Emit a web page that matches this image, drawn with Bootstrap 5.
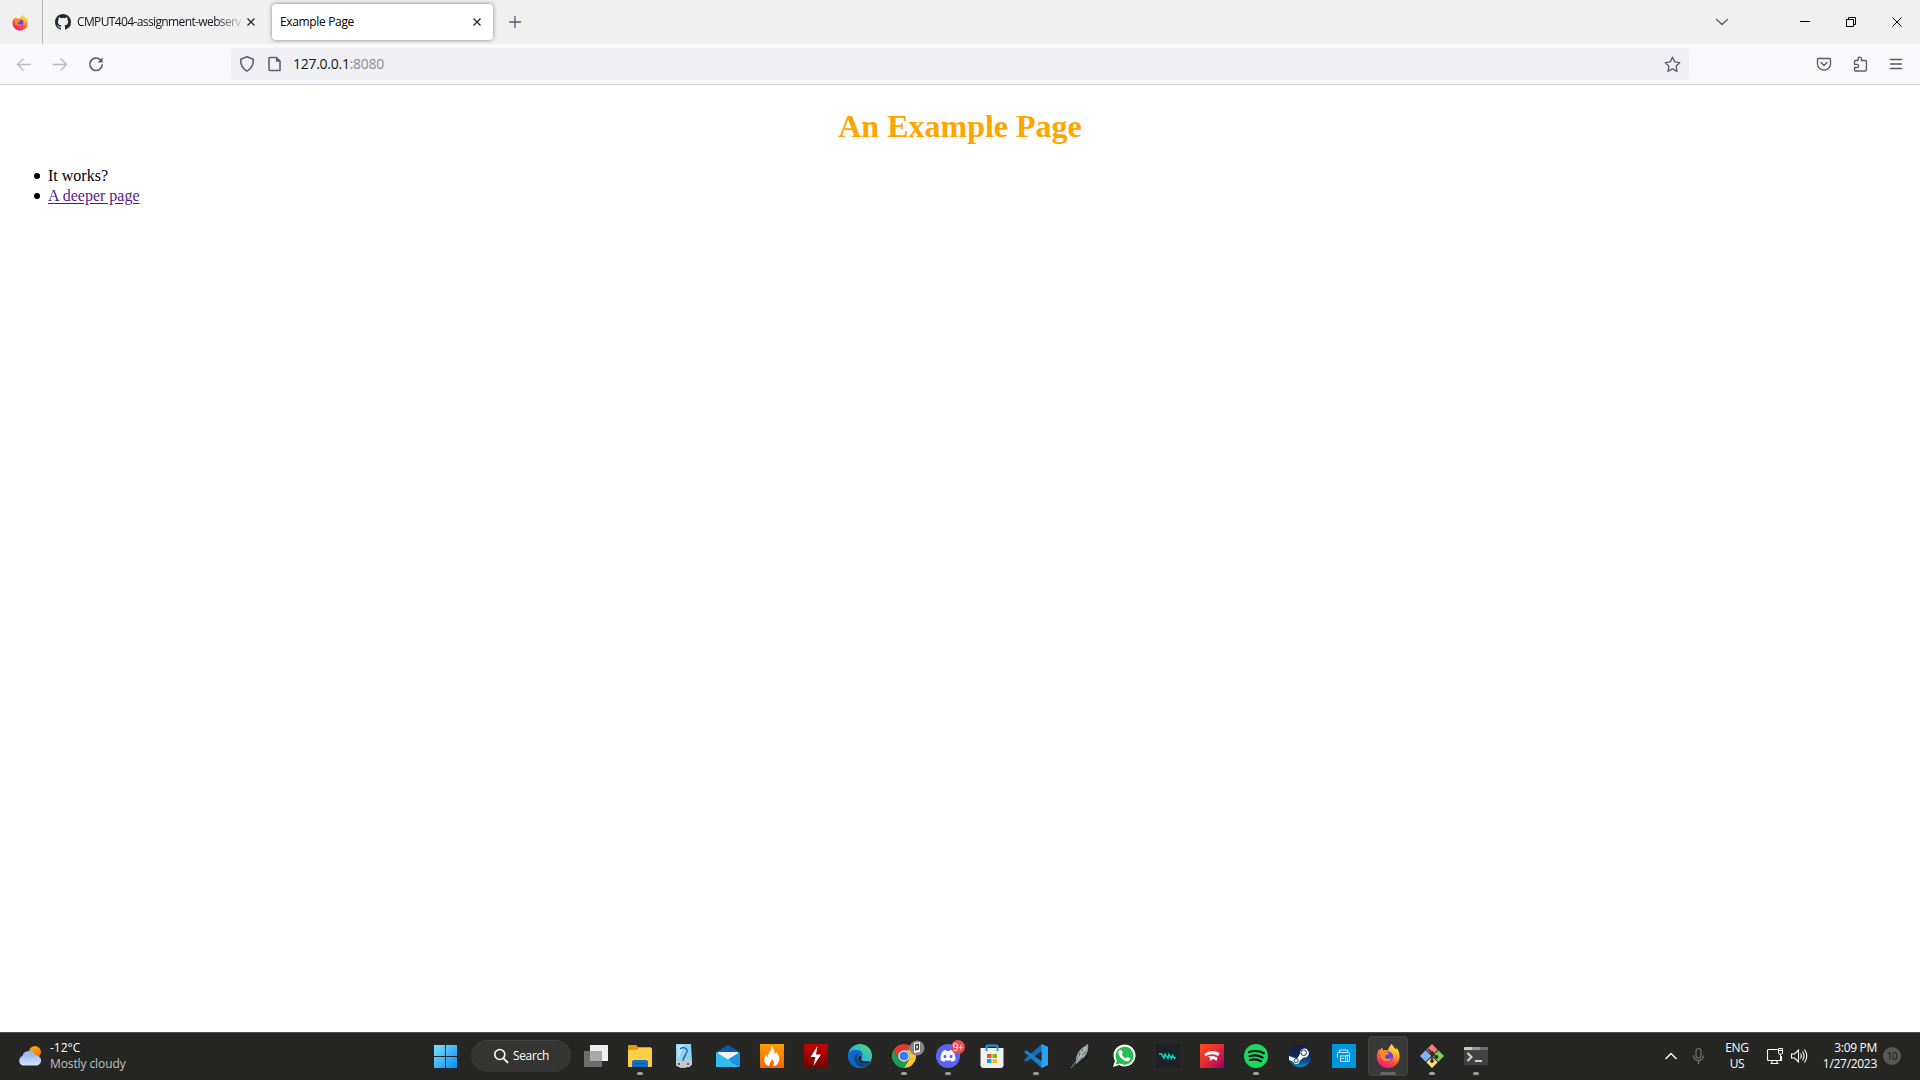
<!DOCTYPE html>
<html lang="en">
<head>
<meta charset="utf-8">
<meta name="viewport" content="width=device-width, initial-scale=1">
<title>Example Page</title>
<link href="https://cdn.jsdelivr.net/npm/bootstrap@5.3.0/dist/css/bootstrap.min.css" rel="stylesheet">
<style>
  body { font-family: "Open Sans", "Noto Sans", sans-serif; background: #fff; overflow: hidden; line-height: 1.2; }
  svg { display: block; flex: none; }
  .ln { fill: none; stroke: #5b5b66; stroke-width: 1.35; stroke-linecap: round; stroke-linejoin: round; }

  .tabstrip { height: 44px; background: #f0f0f0; font-size: 12px; color: #15141a; letter-spacing: -.34px; }
  .fx-view { width: 43px; border-right: 1px solid #b5b5b7; padding-left: 12px; }
  .tab-item { width: 229px; padding: 0 15px 0 12px; flex: none; }
  .tab-title { width: 169px; margin-left: 6px; padding-top: 1px; letter-spacing: -.62px; white-space: nowrap; -webkit-mask-image: linear-gradient(to right, #000 138px, transparent 168px); mask-image: linear-gradient(to right, #000 138px, transparent 168px); }
  .tab-current { width: 221px; height: 36px; background: #fff; border-radius: 4px; box-shadow: 0 0 4px rgba(0,0,0,.45); padding: 0 11px 0 8px; color: #000; }
  .tab-current span { padding-top: 1px; }
  .win-buttons { gap: 30px; padding-right: 15px; }
  .all-tabs { margin-right: 21px; }

  .toolbar { height: 41px; background: #f9f9fb; border-bottom: 1px solid #ccccd0; }
  .nav-buttons { width: 231px; flex: none; gap: 20px; padding-left: 16px; }
  .urlbar { width: 1458px; flex: none; height: 32px; background: #f0f0f4; border-radius: 4px; padding: 0 8px; font-size: 14px; letter-spacing: -.27px; color: #15141a; }
  .address { padding-top: 1px; margin-left: 10px; }
  .port { color: #8b8b91; }
  .tool-buttons { gap: 20px; padding-right: 16px; }

  .webpage { height: 947px; padding: 22px 8px 0; font-family: "Liberation Serif", serif; font-size: 16px; line-height: 20px; color: #000; }
  .webpage h1 { font-size: 32px; line-height: 38px; font-weight: 700; color: orange; margin: 0 0 21px; }
  .webpage ul { padding-left: 26px; }
  .webpage li::before { content: ""; width: 6px; height: 6px; border-radius: 50%; background: #000; margin-right: 8px; }
  .webpage a { color: #551a8b; text-underline-offset: 2px; }

  .taskbar { height: 48px; padding-bottom: 2px; background: #262624; border-top: 1px solid #4b4b4b; color: #fff; font-size: 12px; }
  .weather { width: 423px; padding-left: 17px; line-height: 16px; gap: 7px; }
  .weather-desc { color: #c2c2c2; letter-spacing: -.1px; }
  .task-slot { width: 44px; height: 47px; }
  .searchbox { width: 100px; height: 32px; border-radius: 16px; background: #353533; border-top: 1px solid #434341; margin: 0 3px 0 4px; letter-spacing: -.3px; gap: 4px; }
  .running { bottom: 4px; left: 19px; width: 6px; height: 3px; border-radius: 2px; background: #9c9c9a; }
  .running-active { bottom: 4px; left: 14px; width: 16px; height: 3px; border-radius: 2px; background: #666664; }
  .slot-active::before { content: ""; position: absolute; inset: 4px 2px 3px; background: #393937; border: 1px solid #424240; border-radius: 4px; }
  .count { left: 25px; top: 8px; width: 14px; height: 14px; border-radius: 50%; background: #e94b50; font-size: 10px; line-height: 14px; letter-spacing: -.5px; }
  .profile { right: 1px; top: 8px; }
  .tray { line-height: 16px; padding-right: 19px; }
  .lang { width: 24px; margin: 0 17px 0 19px; letter-spacing: -.3px; }
  .clock { width: 64px; margin-left: 5px; letter-spacing: -.3px; }
  .notices { width: 18px; height: 18px; border-radius: 50%; background: #575755; color: #151514; font-size: 10px; line-height: 18px; margin-left: 6px; letter-spacing: -.5px; }
</style>
<script src="https://cdn.jsdelivr.net/npm/bootstrap@5.3.0/dist/js/bootstrap.bundle.min.js"></script>
</head>
<body class="d-flex flex-column vh-100">
<svg width="0" height="0" class="position-absolute" aria-hidden="true">
  <defs>
    <linearGradient id="gFox" x1=".8" y1="0" x2=".3" y2="1"><stop offset="0" stop-color="#fff04a"/><stop offset=".35" stop-color="#ffb02e"/><stop offset=".65" stop-color="#ff4f3b"/><stop offset="1" stop-color="#f0148a"/></linearGradient>
    <linearGradient id="gWin" x1="0" y1="0" x2="1" y2="1"><stop offset="0" stop-color="#7be0fb"/><stop offset="1" stop-color="#0a8ef5"/></linearGradient>
    <linearGradient id="gEdge" x1="0" y1="1" x2="1" y2="0"><stop offset="0" stop-color="#0d6bd0"/><stop offset=".5" stop-color="#27b4df"/><stop offset="1" stop-color="#63e05a"/></linearGradient>
    <linearGradient id="gFire" x1="0" y1="0" x2="0" y2="1"><stop offset="0" stop-color="#ffa000"/><stop offset="1" stop-color="#f56200"/></linearGradient>
    <linearGradient id="gRed" x1="0" y1="0" x2="0" y2="1"><stop offset="0" stop-color="#c60202"/><stop offset="1" stop-color="#760000"/></linearGradient>
    <linearGradient id="gStadia" x1="0" y1="0" x2="1" y2="1"><stop offset="0" stop-color="#ff4c1d"/><stop offset=".5" stop-color="#e52b38"/><stop offset="1" stop-color="#9a0068"/></linearGradient>
    <linearGradient id="gSteam" x1="0" y1="0" x2="0" y2="1"><stop offset="0" stop-color="#151c3c"/><stop offset=".5" stop-color="#10295a"/><stop offset="1" stop-color="#1683bd"/></linearGradient>
    <linearGradient id="gCloud" x1="0" y1="0" x2="0" y2="1"><stop offset="0" stop-color="#8fb4ee"/><stop offset="1" stop-color="#d4e3fb"/></linearGradient>
    <linearGradient id="gSun" x1="0" y1="0" x2="1" y2="1"><stop offset="0" stop-color="#f7b51c"/><stop offset="1" stop-color="#ef6a0c"/></linearGradient>
    <symbol id="firefox" viewBox="0 0 24 24">
      <path fill="url(#gFox)" d="M15.500 0c1.200 1.400 2.300 2.600 3.200 4.200l1.600 1.200c.1-.7.1-1.300 0-2 2.300 2.400 3.500 6 3.300 9.600C23.300 19.300 18.200 24 12 24S.8 19 .8 12.700c0-2.900.7-5.700 2.400-7.900 0 .7.100 1.300.3 1.900.8-1.300 1.700-2.400 2.900-3.100l.4 2.800c1.700-.6 3.300-.5 5 .1 1-2.700 2.100-4.700 3.700-6.500z"/>
      <circle cx="12" cy="12.500" r="5" fill="#6c3fe0"/>
      <path fill="#ff8b2c" d="M3.500 6.700c2-1 5-1 7.600 1.300l2 1.800c-.8 1-2.200 1.100-3.300 1.400-1.200.6-1.200 2.200-.2 3.100 1.400 1.200 4.200 1 6.300-.7-.7 3.400-5.300 4.800-8.700 2.600-2.400-1.600-3.900-5.400-3.700-9.500z"/>
    </symbol>
  </defs>
</svg>

<header>
  <div class="tabstrip d-flex align-items-center">
    <div class="fx-view h-100 d-flex align-items-center"><svg width="16" height="17"><use href="#firefox"/></svg></div>
    <div class="tab-item d-flex align-items-center">
      <svg width="16" height="16" viewBox="0 0 16 16"><path fill="#24292f" d="M8 0C3.580 0 0 3.580 0 8c0 3.540 2.290 6.530 5.470 7.590.4.070.55-.17.55-.38v-1.340c-2.230.48-2.700-1.070-2.700-1.070-.36-.92-.89-1.170-.89-1.170-.72-.5.060-.49.060-.49.8.060 1.230.83 1.230.83.71 1.220 1.870.87 2.330.66.070-.52.280-.87.500-1.070-1.780-.2-3.640-.89-3.640-3.950 0-.87.310-1.590.82-2.150-.08-.2-.36-1.020.080-2.120 0 0 .67-.21 2.200.82a7.600 7.600 0 0 1 4 0c1.530-1.040 2.200-.82 2.200-.82.44 1.100.16 1.920.080 2.120.51.560.82 1.270.82 2.150 0 3.070-1.870 3.750-3.650 3.950.29.250.54.730.54 1.480v2.200c0 .21.150.46.550.38A8 8 0 0 0 16 8c0-4.420-3.580-8-8-8z"/></svg>
      <div class="tab-title">CMPUT404-assignment-webserv</div>
      <svg width="10" height="10" viewBox="0 0 10 10"><path d="M1.500 1.500l7 7m0-7l-7 7" stroke="#222" stroke-width="1.200"/></svg>
    </div>
    <div class="tab-current d-flex align-items-center justify-content-between">
      <span>Example Page</span>
      <svg width="10" height="10" viewBox="0 0 10 10"><path d="M1.500 1.500l7 7m0-7l-7 7" stroke="#222" stroke-width="1.200"/></svg>
    </div>
    <svg class="ms-3" width="12" height="14" viewBox="1 0 12 14"><path d="M7 1.500v11M1.500 7h11" class="ln"/></svg>
    <div class="win-buttons ms-auto d-flex align-items-center">
      <svg class="all-tabs" width="16" height="16" viewBox="0 0 16 16"><path d="M2.500 5.500L8 10.500l5.500-5" class="ln"/></svg>
      <svg width="16" height="16" viewBox="0 0 16 16" class="ms-3"><path d="M3 7.500h10" stroke="#000"/></svg>
      <svg width="16" height="16" viewBox="0 0 16 16"><path d="M3.500 5.500h7v7h-7zM5.500 5.500v-2h7v7h-2" fill="none" stroke="#000"/></svg>
      <svg width="16" height="16" viewBox="0 0 16 16"><path d="M3.500 3.500l9 9m0-9l-9 9" stroke="#000"/></svg>
    </div>
  </div>
  <div class="toolbar d-flex align-items-center">
    <div class="nav-buttons d-flex">
      <svg width="16" height="16" viewBox="0 0 16 16"><path d="M14.500 8.500H1.500m5.500-5.500l-5.500 5.500L7 14" class="ln" style="stroke:#bababf"/></svg>
      <svg width="16" height="16" viewBox="0 0 16 16"><path d="M1.500 8.500h13M9 3l5.500 5.500L9 14" class="ln" style="stroke:#bababf"/></svg>
      <svg width="16" height="16" viewBox="0 0 16 16"><path d="M12.500 4A6.200 6.200 0 1 0 14.200 8.700" class="ln" style="stroke-width:1.600"/><path d="M14.600 1.500v5H9.600z" fill="#5b5b66"/></svg>
    </div>
    <div class="urlbar d-flex align-items-center">
      <svg width="16" height="16" viewBox="0 0 16 16"><path d="M8 .8l6.200 2.400c.5 4.800-1 9-6.200 12C2.800 12.200 1.300 8 1.800 3.200z" class="ln" style="stroke-width:1.500"/></svg>
      <svg width="16" height="16" viewBox="0 0 16 16" style="margin-left:12px"><path d="M3 1.500h6.500l3.500 3.500v9.500H3a1 1 0 0 1-1-1v-11a1 1 0 0 1 1-1z" class="ln" style="stroke-width:1.500"/><path d="M9 1v4.700h4.500z" fill="#5b5b66"/></svg>
      <span class="address me-auto">127.0.0.1<span class="port">:8080</span></span>
      <svg width="17" height="17" viewBox="0 0 17 17"><path d="M8.500 1.200l2.200 4.700 5.100.7-3.700 3.600.9 5.100-4.500-2.400L4 15.300l.9-5.100L1.200 6.600l5.100-.7z" class="ln"/></svg>
    </div>
    <div class="tool-buttons ms-auto d-flex">
      <svg width="16" height="16" viewBox="0 0 16 16"><path d="M2.500 2.500h11a1 1 0 0 1 1 1V8a6.500 6 0 0 1-13 0V3.500a1 1 0 0 1 1-1zM5 6.500l3 3 3-3" class="ln"/></svg>
      <svg width="16" height="16" viewBox="0 0 16 16"><path d="M3.500 4.500H6V2.800a1.700 1.700 0 0 1 3.400 0v1.700h4a1 1 0 0 1 1 1V14a1 1 0 0 1-1 1H3.500a1 1 0 0 1-1-1v-2.500H5a1.500 1.500 0 0 0 0-3.200H2.500V5.500a1 1 0 0 1 1-1z" class="ln"/></svg>
      <svg width="16" height="16" viewBox="0 0 16 16"><path d="M2.500 3.500h11M2.500 8h11M2.500 12.500h11" class="ln"/></svg>
    </div>
  </div>
</header>

<main class="webpage">
  <h1 class="text-center">An Example Page</h1>
  <ul class="list-unstyled mb-0" style="padding-left:26px">
    <li class="d-flex align-items-center">It works?</li>
    <li class="d-flex align-items-center"><a href="#">A deeper page</a></li>
  </ul>
</main>

<footer class="taskbar d-flex align-items-center">
  <div class="weather d-flex align-items-center">
    <svg width="26" height="24" viewBox="0 0 26 24"><circle cx="18" cy="8" r="6" fill="url(#gSun)"/><path d="M6 21.500a5 5 0 0 1-.5-9.500 6.500 6.500 0 0 1 12.500-.5A5 5 0 0 1 20 21.500z" fill="url(#gCloud)"/><path d="M8 13c2-1 4-.5 5 1 1-1.500 3-2.200 5-1.500" fill="none" stroke="#9fbdf0"/></svg>
    <div><div class="temp">-12°C</div><div class="weather-desc">Mostly cloudy</div></div>
  </div>
  <div class="task-slot d-flex align-items-center justify-content-center">
    <svg width="24" height="24" viewBox="0 0 24 24"><path fill="url(#gWin)" d="M1 1h11v11H1zM13 1h11v11H13zM1 13h11v11H1zM13 13h11v11H13z"/></svg>
  </div>
  <div class="searchbox d-flex align-items-center justify-content-center">
    <svg width="16" height="16" viewBox="0 0 16 16"><circle cx="6.800" cy="6.500" r="5" fill="none" stroke="#fff" stroke-width="1.600"/><path d="M10.500 10.300l4 4" stroke="#fff" stroke-width="1.800" stroke-linecap="round"/></svg>
    <span>Search</span>
  </div>
  <nav class="d-flex" aria-label="Apps">
    <div class="task-slot d-flex align-items-center justify-content-center"><svg width="24" height="24" viewBox="0 0 24 24"><path fill="#eeeeee" d="M6 1h18v16H6z"/><path fill="#777" fill-opacity=".88" d="M0 7h18v16H0z"/><path fill="#a8a8a8" d="M6 7h12v10H6z"/></svg></div>
    <div class="task-slot position-relative d-flex align-items-center justify-content-center"><svg width="24" height="24" viewBox="0 0 24 24"><path fill="#e09a09" d="M0 2q0-1 1-1h7l2 2h13v6H0z"/><path fill="#ffce49" d="M0 6h9l2-2h12q1 0 1 1v17q0 1-1 1H1q-1 0-1-1z"/><path fill="#0f6fc2" d="M4 23v-5q0-2 2-2h12q2 0 2 2v5z"/><path fill="#084f92" d="M7 19h10v1H7z"/></svg><span class="running position-absolute"></span></div>
    <div class="task-slot d-flex align-items-center justify-content-center"><svg width="24" height="24" viewBox="0 0 24 24"><path fill="#8fd1f0" d="M4 0h15l1 17-2 6-10 1-4-4z"/><path fill="#bfe6f8" d="M5 1h7L6 16z"/><path fill="#c5c9cc" d="M4 17l16-1v5l-8 3-8-2z"/><path d="M8 5c4-3 8 0 7 3s-4 4-4 9M15 8l-4 8" fill="none" stroke="#1268a9" stroke-width="1.200"/><path fill="#5e6468" d="M6 19h2v2H6zm9 0h2v2h-2z"/></svg></div>
    <div class="task-slot d-flex align-items-center justify-content-center"><svg width="24" height="24" viewBox="0 0 24 24"><path fill="#0c59a4" d="M0 8l12-7 12 7v5H0z"/><path fill="#f2f2f2" d="M2 8h20v7l-10 3L2 15z"/><path fill="#31bdf2" d="M0 8l24 15H0z"/><path fill="#1e93e0" d="M24 8v15L12 15.500z"/></svg></div>
    <div class="task-slot d-flex align-items-center justify-content-center"><svg width="24" height="24" viewBox="0 0 24 24"><path fill="url(#gFire)" d="M0 0h24v24H0z"/><path fill="#fff" d="M11 2c3 3 4 5 3.500 8 1 0 1.500-1 1.500-2 3 3 4 6 3 9-1 3-3 5-6 5 2-2 1-5-1-7 0 2-3 3-2.500 7-4-.5-6-4-5-8 .5-2 1.500-3 2-4 0 2 0 3 1.200 3.500C7.500 9 12 7 11 2z"/></svg></div>
    <div class="task-slot d-flex align-items-center justify-content-center"><svg width="24" height="24" viewBox="0 0 24 24"><path fill="url(#gRed)" d="M0 0h24v24H0z"/><path fill="#fff" d="M13.500 2L6.500 13h4.800L9.500 22 17 10.500h-5z"/></svg></div>
    <div class="task-slot d-flex align-items-center justify-content-center"><svg width="24" height="24" viewBox="0 0 24 24"><circle cx="12" cy="12" r="12" fill="url(#gEdge)"/><path fill="#0d67c4" d="M0 12c1-5 5-6.500 9-6 4 .4 6 3 5.500 6-3-2-6 .5-5 4 1 4 6 5 12 2.500C17 27 1 26 0 12z"/><path fill="#10458e" d="M8 10c-4 5 0 13 7 13 3-.5 5-2 7-5-5 2.500-10 1.500-12-2-1-2-.5-4 1-5z"/><path fill="#262624" d="M11 12c2-1.500 3.500.5 2.500 2.500-1.300 2.200 2.500 3.500 7 2.500l2 1c-5 2.500-10 2-12-2-.7-1.600-.4-3 .5-4z"/></svg></div>
    <div class="task-slot position-relative d-flex align-items-center justify-content-center">
      <svg width="24" height="24" viewBox="0 0 24 24"><path fill="#e33b2e" d="M12 0a12 12 0 0 1 10.400 6H12a6 6 0 0 0-5.200 9L1.600 6A12 12 0 0 1 12 0z"/><path fill="#fcc934" d="M22.400 6A12 12 0 0 1 12 24l5.200-9A6 6 0 0 0 12 6z"/><path fill="#1e9e4a" d="M1.600 6l5.200 9A6 6 0 0 0 17.200 15L12 24A12 12 0 0 1 1.600 6z"/><circle cx="12" cy="12" r="5.800" fill="#fff"/><circle cx="12" cy="12" r="4.600" fill="#3b7ded"/></svg>
      <svg class="profile position-absolute" width="16" height="16" viewBox="0 0 16 16"><circle cx="8" cy="8" r="7.500" fill="#858583"/><path fill="#eee" d="M5 3l6-1v10l-6 1z"/><path fill="#3a3a3a" d="M6 4.500l4-1v6l-4 1z"/><path fill="#ccc" d="M7 6l2-1v3l-2 1z"/></svg><span class="running position-absolute"></span></div>
    <div class="task-slot position-relative d-flex align-items-center justify-content-center"><svg width="24" height="24" viewBox="0 0 24 24"><circle cx="12" cy="12" r="12" fill="#5865f2"/><path fill="#fff" d="M7 7q1.500-.8 3-1l.6 1q1.400-.2 2.800 0l.6-1q1.500.2 3 1c2 3 2.700 6 2.400 9-1.300 1-2.400 1.500-3.800 1.800l-.9-1.500q-2.700.7-5.400 0l-.9 1.500C7 17.500 5.900 17 4.600 16 4.300 13 5 10 7 7z"/><ellipse cx="9" cy="12.500" rx="1.500" ry="1.700" fill="#5865f2"/><ellipse cx="15" cy="12.500" rx="1.500" ry="1.700" fill="#5865f2"/></svg><span class="count position-absolute text-center">9+</span><span class="running position-absolute"></span></div>
    <div class="task-slot d-flex align-items-center justify-content-center"><svg width="24" height="24" viewBox="0 0 24 24"><path d="M6.500 7V2.500q0-1 1-1h9q1 0 1 1V7" fill="none" stroke="#249be5" stroke-width="2"/><path fill="#f1f1f1" d="M.5 4h23v17q0 3-3 3h-17q-3 0-3-3z"/><path fill="#249be5" d="M5.500 4h2v3h-2zm11 0h2v3h-2z"/><path fill="#f25022" d="M7 10h4.500v4H7z"/><path fill="#7fba00" d="M12.500 10H17v4h-4.500z"/><path fill="#00a4ef" d="M7 15h4.500v4H7z"/><path fill="#ffb900" d="M12.500 15H17v4h-4.500z"/></svg></div>
    <div class="task-slot position-relative d-flex align-items-center justify-content-center"><svg width="24" height="24" viewBox="0 0 24 24"><path fill="#0b70bd" d="M0 16l2 2L18 7V0L3 13z"/><path fill="#1680cf" d="M0 8l2-2 16 11.500V24z"/><path fill="#2ba3f1" d="M17.500 0L24 2.700v18.600L17.500 24z"/></svg><span class="running position-absolute"></span></div>
    <div class="task-slot d-flex align-items-center justify-content-center"><svg width="24" height="24" viewBox="0 0 24 24"><path fill="#1d1d1c" d="M7 19l12-8 2 2-5 5z"/><path fill="#a3a7a8" d="M20 0c1 4-1 12-6 15l-6 5c-1-5 1-12 6-16z"/><path d="M19 2L3 24M11 8l1 4m2-7l1 4m-5 7l5-2m-1-3l4-3" fill="none" stroke="#60686c"/><path d="M18 3l-8 13" stroke="#dcdcdc"/><path d="M8 18l-5 6" stroke="#777"/></svg></div>
    <div class="task-slot d-flex align-items-center justify-content-center"><svg width="24" height="24" viewBox="0 0 24 24"><path fill="#fff" d="M1 23l2-6A11 11 0 1 1 7 21z"/><path fill="#27bd50" d="M3.500 20.500l1.400-4A9 9 0 1 1 8 19.500z"/><path fill="#fff" d="M8 6h1.500l1.300 3-1 1.500c1 2 2.200 3 4 3.800l1.500-1.500 3 1.500c0 2-1.300 3-3 3-4 0-9-5-9-8.500C6.300 7.500 7 6.300 8 6z"/></svg></div>
    <div class="task-slot d-flex align-items-center justify-content-center"><svg width="24" height="24" viewBox="0 0 24 24"><rect width="24" height="24" rx="1" fill="#1c2126"/><path d="M3 10h2.500l2.500 4 1-4 3 4.500 1-4 2.500 4 1-3 2 3 1-1.500" fill="none" stroke="#12cfc4" stroke-width="1.500"/></svg></div>
    <div class="task-slot d-flex align-items-center justify-content-center"><svg width="24" height="24" viewBox="0 0 24 24"><path fill="url(#gStadia)" d="M0 0h24v24H0z"/><path fill="#fff" d="M4.500 10C9 6.500 15 6 19.500 9.500L18 12c-3-2-6.500-2.300-10.500-1L6 12.500zM8 12.500c3.500-1 6.500-.6 9.500 1L16.500 17c-1.500-1.700-3-2-4.500-1.500L9.500 17l.8-2.500z"/></svg></div>
    <div class="task-slot position-relative d-flex align-items-center justify-content-center"><svg width="24" height="24" viewBox="0 0 24 24"><circle cx="12" cy="12" r="12" fill="#1ed760"/><path d="M5 8q8-2.500 15 1.200M5.500 12.200q7-2 13 1.300M6 16q6-1.600 11 1.200" fill="none" stroke="#111" stroke-width="2.200" stroke-linecap="round"/></svg><span class="running position-absolute"></span></div>
    <div class="task-slot d-flex align-items-center justify-content-center"><svg width="24" height="24" viewBox="0 0 24 24"><circle cx="12" cy="12" r="11.300" fill="url(#gSteam)"/><path fill="#fff" d="M1 12l8 3 3-5a4.500 4.500 0 1 1 3.500 3.500L11.500 17a3.200 3.200 0 0 1-6.300.7L1 16z"/><circle cx="15.700" cy="8.700" r="2.800" fill="none" stroke="#16264c" stroke-width="1"/><circle cx="8.200" cy="16.700" r="2" fill="none" stroke="#17548a"/></svg></div>
    <div class="task-slot d-flex align-items-center justify-content-center"><svg width="24" height="24" viewBox="0 0 24 24"><path fill="#0096dc" d="M0 0h24v24H0z"/><path d="M7.500 8V6h8v2M5.500 13.500v-4q0-1 1-1h10q1 0 1 1V11M8 12h5M8.500 12v5.500H13M9.500 14.500H12M13.500 11.500h4v6h-4zM15.500 11.500v6" fill="none" stroke="#bce8fb"/></svg></div>
    <div class="task-slot slot-active position-relative d-flex align-items-center justify-content-center"><svg class="position-relative" width="24" height="24"><use href="#firefox"/></svg><span class="running-active position-absolute"></span></div>
    <div class="task-slot position-relative d-flex align-items-center justify-content-center"><svg width="24" height="24" viewBox="0 0 24 24"><g transform="rotate(45 12 12)"><path fill="#f47c7c" d="M3.500 3.500h8v8h-8z"/><path fill="#84c75a" d="M12.500 3.500h8v8h-8z"/><path fill="#7fb0fb" d="M3.500 12.500h8v8h-8z"/><path fill="#fbdf7c" d="M12.500 12.500h8v8h-8z"/></g><path d="M8 5l4 4v9M12 9l4 4" stroke="#33302e" stroke-width="1.700" fill="none"/><circle cx="12" cy="9" r="1.900" fill="#33302e"/><circle cx="16.500" cy="13" r="1.900" fill="#33302e"/><circle cx="12" cy="17" r="1.900" fill="#33302e"/></svg><span class="running position-absolute"></span></div>
    <div class="task-slot position-relative d-flex align-items-center justify-content-center"><svg width="24" height="24" viewBox="0 0 24 24"><rect y="3" width="24" height="18" rx="1" fill="#424245"/><path fill="#c9c9c9" d="M0 6V4q0-1 1-1h7v3z"/><path fill="#999" d="M8 3h8v3H8z"/><path fill="#6f6f70" d="M16 3h7q1 0 1 1v2h-8z"/><path d="M3.500 9l4 4-4 4" fill="none" stroke="#d7d7d7" stroke-width="2"/><path d="M11 17h7" stroke="#fff" stroke-width="1.500"/></svg><span class="running position-absolute"></span></div>
  </nav>
  <div class="tray ms-auto d-flex align-items-center">
    <svg width="14" height="14" viewBox="0 0 14 14"><path d="M1.500 10L7 4.500l5.500 5.500" fill="none" stroke="#fff" stroke-width="1.400"/></svg>
    <svg width="16" height="18" viewBox="0 0 16 18" style="margin-left:12px"><rect x="6" y="1.500" width="5" height="9.500" rx="2.500" fill="none" stroke="#70706e" stroke-width="1.200"/><path d="M3.500 8.500a5 5 0 0 0 10 0M8.500 13.500V17" fill="none" stroke="#70706e" stroke-width="1.200"/></svg>
    <div class="lang text-center">ENG<br>US</div>
    <svg width="18" height="18" viewBox="0 0 18 18"><path d="M11.500 2.500h-9q-1 0-1 1v9q0 1 1 1h13V9M6 13.500V17m5-3.500V17M4.500 16.500h8" fill="none" stroke="#fff" stroke-width="1.100"/><path d="M12.500 1.500h4V6q0 1-1 1h-2q-1 0-1-1zM12.500 3.500h4M14.500 7v6" fill="none" stroke="#fff"/></svg>
    <svg width="18" height="18" viewBox="0 0 18 18" style="margin-left:6px"><path d="M1.500 7h3l4-4v12l-4-4h-3zM10.500 6.500q1.800 2.500 0 5M12.500 4.500q3.200 4.500 0 9M14.500 2.500q4.600 6.500 0 13" fill="none" stroke="#fff" stroke-width="1.100"/></svg>
    <div class="clock text-end text-nowrap">3:09 PM<br>1/27/2023</div>
    <div class="notices text-center">10</div>
  </div>
</footer>
</body>
</html>
